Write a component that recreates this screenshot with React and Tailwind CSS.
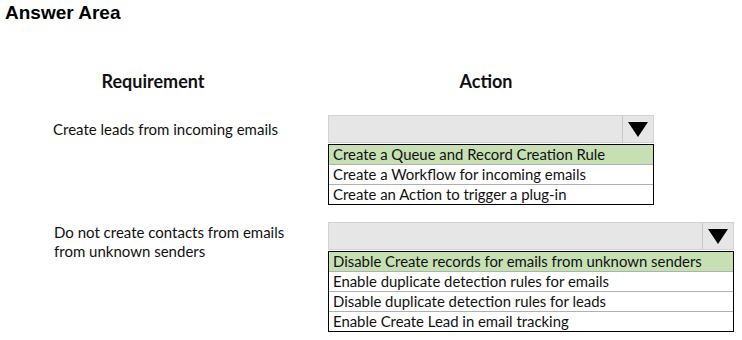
function Dropdown({ width, options }) {
  return (
    <div className={width}>
      <div className="flex h-[28px] bg-[#e6e6e6] border border-[#d2d2d2]">
        <div className="flex-1" />
        <div className="w-[31px] border-l border-[#c8c8c8] flex items-center justify-center">
          <svg width="20" height="16" viewBox="0 0 20 16">
            <polygon points="0,1 20,1 10,16" fill="#000" />
          </svg>
        </div>
      </div>
      <div className="mt-px border border-black">
        {options.map((opt, i) => (
          <div
            key={opt}
            className={
              "px-[4px] flex items-center text-[14.9px] leading-[19px] text-[#111] " +
              (i === 0 ? "h-[19px] bg-[#c6e0b4]" : "h-[20px] border-t border-[#b0b0b0]")
            }
          >
            {opt}
          </div>
        ))}
      </div>
    </div>
  );
}

export default function App() {
  return (
    <div className="w-[742px] h-[340px] bg-white font-['Lato'] text-[#111]">
      <h1 className="pl-[5px] pt-[1px] text-[19px] leading-[24px] font-bold font-['Liberation_Sans'] text-black">
        Answer Area
      </h1>

      <div className="mt-[44px] flex text-[18px] font-bold leading-[24px]">
        <div className="w-[306px] text-center">Requirement</div>
        <div className="ml-[22px] w-[316px] text-center">Action</div>
      </div>

      <div className="mt-[22px] flex">
        <div className="w-[328px] pl-[53px] pt-[5px] text-[15px] leading-[19px]">
          Create leads from incoming emails
        </div>
        <Dropdown
          width="w-[326px]"
          options={[
            "Create a Queue and Record Creation Rule",
            "Create a Workflow for incoming emails",
            "Create an Action to trigger a plug-in",
          ]}
        />
      </div>

      <div className="mt-[17px] flex">
        <div className="w-[328px] pl-[54px] pt-[1px] text-[15px] leading-[19px]">
          Do not create contacts from emails
          <br />
          from unknown senders
        </div>
        <Dropdown
          width="w-[406px]"
          options={[
            "Disable Create records for emails from unknown senders",
            "Enable duplicate detection rules for emails",
            "Disable duplicate detection rules for leads",
            "Enable Create Lead in email tracking",
          ]}
        />
      </div>
    </div>
  );
}
